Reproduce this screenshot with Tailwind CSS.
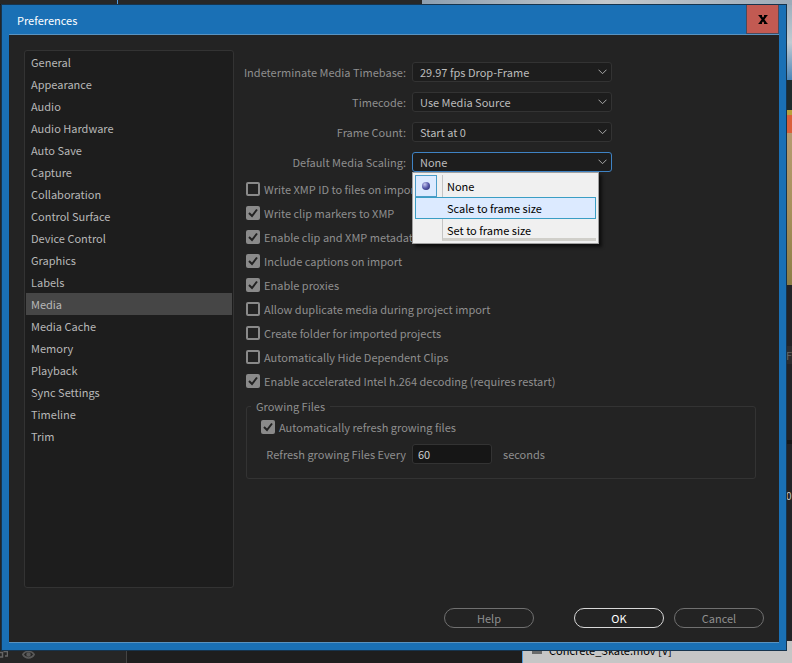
<!DOCTYPE html>
<html lang="en">
<head>
    <meta charset="UTF-8">
    <meta name="viewport" content="width=device-width, initial-scale=1.0">
    <title>Preferences</title>
    <script src="https://cdn.jsdelivr.net/npm/@tailwindcss/browser@4"></script>
</head>
<body class="bg-[#1e1e1e] font-['Noto_Sans_CJK_SC',sans-serif] text-[11px] leading-[20px] text-[#8f8f8f]">
<div class="relative min-h-screen flex flex-col overflow-hidden">

    <!-- Application behind the dialog: top edge -->
    <div class="h-[5px] flex bg-[#272727]">
        <div class="w-[117px] border-b border-[#1a1a1a]"></div>
        <div class="w-[1px] bg-[#4f9be0]"></div>
        <div class="w-[304px] border-b border-[#1a1a1a]"></div>
        <div class="flex-1 bg-linear-to-r from-[#8d9fb0] via-[#c3c8cc] to-[#9dabb9]"></div>
    </div>

    <div class="flex-1 flex">
        <div class="w-[2px] bg-[#252525]"></div>

        <!-- Dialog -->
        <main class="relative flex-1 flex flex-col bg-[#1a70b5] outline outline-[#17344d]">
            <header class="h-[29px] flex items-center pl-[15px] pr-[7px]">
                <h1 class="flex-1 text-white">Preferences</h1>
                <button aria-label="Close" class="w-[33px] h-[29px] grid place-items-center bg-[#c25a52] border-x border-b border-[#4a4a5c]">
                    <svg width="10" height="9" viewBox="0 0 10 9" fill="none" stroke="#000" stroke-width="2.2"><path d="M2 .5l6 8M8 .5l-6 8"/><path stroke-width="1" d="M.5 .5h3.500M6 .5h3.500M.5 8.500h3.500M6 8.500h3.500"/></svg>
                </button>
            </header>

            <div class="flex-1 flex flex-col gap-[20px] mx-[7px] mb-[7px] px-[15px] pt-[15px] pb-[14px] bg-[#232323] border-y border-[#5a93c0]">
                <div class="flex-1 flex gap-[12px]">

                    <!-- Category list -->
                    <nav class="w-[210px] border border-[#333] rounded-[3px] bg-[#1d1d1d] text-[#b8b8b8]">
                        <ul class="px-[1px] leading-[22px]">
                            <li><a href="#" class="block px-[5px]">General</a></li>
                            <li><a href="#" class="block px-[5px]">Appearance</a></li>
                            <li><a href="#" class="block px-[5px]">Audio</a></li>
                            <li><a href="#" class="block px-[5px]">Audio Hardware</a></li>
                            <li><a href="#" class="block px-[5px]">Auto Save</a></li>
                            <li><a href="#" class="block px-[5px]">Capture</a></li>
                            <li><a href="#" class="block px-[5px]">Collaboration</a></li>
                            <li><a href="#" class="block px-[5px]">Control Surface</a></li>
                            <li><a href="#" class="block px-[5px]">Device Control</a></li>
                            <li><a href="#" class="block px-[5px]">Graphics</a></li>
                            <li><a href="#" class="block px-[5px]">Labels</a></li>
                            <li><a href="#" class="block px-[5px] bg-[#464646]">Media</a></li>
                            <li><a href="#" class="block px-[5px]">Media Cache</a></li>
                            <li><a href="#" class="block px-[5px]">Memory</a></li>
                            <li><a href="#" class="block px-[5px]">Playback</a></li>
                            <li><a href="#" class="block px-[5px]">Sync Settings</a></li>
                            <li><a href="#" class="block px-[5px]">Timeline</a></li>
                            <li><a href="#" class="block px-[5px]">Trim</a></li>
                        </ul>
                    </nav>

                    <!-- Media settings -->
                    <section class="flex-1 pt-[12px] pr-[8px]">
                        <div class="flex flex-col gap-[10px]">
                            <div class="flex gap-[6px]">
                                <label for="timebase" class="w-[160px] flex justify-end whitespace-nowrap">Indeterminate Media Timebase:</label>
                                <div class="relative w-[200px]">
                                    <select id="timebase" class="block appearance-none w-full h-[20px] pl-[7px] border border-[#333] rounded-[3px] bg-[#1d1d1d] text-[#bcbcbc] leading-[18px]"><option>29.97 fps Drop-Frame</option></select>
                                    <svg class="absolute right-[5px] top-[7px] pointer-events-none" width="9" height="6" viewBox="0 0 9 6" fill="none" stroke="#a8a8a8"><path d="M.5 .7l4 4 4-4"/></svg>
                                </div>
                            </div>
                            <div class="flex gap-[6px]">
                                <label for="timecode" class="w-[160px] flex justify-end">Timecode:</label>
                                <div class="relative w-[200px]">
                                    <select id="timecode" class="block appearance-none w-full h-[20px] pl-[7px] border border-[#333] rounded-[3px] bg-[#1d1d1d] text-[#bcbcbc] leading-[18px]"><option>Use Media Source</option></select>
                                    <svg class="absolute right-[5px] top-[7px] pointer-events-none" width="9" height="6" viewBox="0 0 9 6" fill="none" stroke="#a8a8a8"><path d="M.5 .7l4 4 4-4"/></svg>
                                </div>
                            </div>
                            <div class="flex gap-[6px]">
                                <label for="frames" class="w-[160px] flex justify-end">Frame Count:</label>
                                <div class="relative w-[200px]">
                                    <select id="frames" class="block appearance-none w-full h-[20px] pl-[7px] border border-[#333] rounded-[3px] bg-[#1d1d1d] text-[#bcbcbc] leading-[18px]"><option>Start at 0</option></select>
                                    <svg class="absolute right-[5px] top-[7px] pointer-events-none" width="9" height="6" viewBox="0 0 9 6" fill="none" stroke="#a8a8a8"><path d="M.5 .7l4 4 4-4"/></svg>
                                </div>
                            </div>
                            <div class="flex gap-[6px]">
                                <label for="scaling" class="w-[160px] flex justify-end">Default Media Scaling:</label>
                                <div class="relative w-[200px]">
                                    <select id="scaling" class="block appearance-none w-full h-[20px] pl-[7px] border border-[#3f83c4] rounded-[3px] bg-[#1d1d1d] text-[#bcbcbc] leading-[18px]"><option>None</option><option>Scale to frame size</option><option>Set to frame size</option></select>
                                    <svg class="absolute right-[5px] top-[7px] pointer-events-none" width="9" height="6" viewBox="0 0 9 6" fill="none" stroke="#a8a8a8"><path d="M.5 .7l4 4 4-4"/></svg>

                                    <!-- Open menu -->
                                    <div role="menu" class="absolute z-10 left-0 top-full w-[187px] p-[2px] border border-[#a0a0a0] bg-[#f0f0f0] text-black leading-[22px] shadow-[3px_3px_3px_rgba(0,0,0,0.6)]">
                                        <button role="menuitem" class="w-full h-[22px] flex text-left">
                                            <span class="w-[22px] h-[22px] grid place-items-center border border-[#4a9cc8] bg-[#dceaff]">
                                                <span class="size-[8px] rounded-full bg-radial-[at_35%_30%] from-[#c4c6ee] via-[#5558a8] to-[#22245f]"></span>
                                            </span>
                                            <span class="flex-1 ml-[5px] pl-[4px] border-l border-[#c4c4c4]">None</span>
                                        </button>
                                        <button role="menuitem" class="w-full h-[22px] block pl-[31px] text-left leading-[20px] border border-[#3a9ec4] bg-[#dceaff]">Scale to frame size</button>
                                        <button role="menuitem" class="w-full h-[22px] flex pl-[27px] text-left">
                                            <span class="flex-1 h-[22px] pl-[4px] border-l border-l-[#c4c4c4] border-b-[3px] border-b-[#d0cfca]">Set to frame size</span>
                                        </button>
                                    </div>
                                </div>
                            </div>
                        </div>

                        <div class="mt-[5px] leading-[24px]">
                            <label class="flex items-center gap-[4px]"><input type="checkbox" class="appearance-none size-[14px] border-2 border-[#8a8a8a] rounded-[2px]">Write XMP ID to files on import</label>
                            <label class="flex items-center gap-[4px]"><span class="relative size-[14px]"><input type="checkbox" checked class="block appearance-none size-[14px] rounded-[2px] bg-[#8a8a8a]"><svg class="absolute inset-0 pointer-events-none" width="14" height="14" viewBox="0 0 14 14" fill="none" stroke="#232323" stroke-width="2"><path d="M3 7l3 3 5-6.500"/></svg></span>Write clip markers to XMP</label>
                            <label class="flex items-center gap-[4px]"><span class="relative size-[14px]"><input type="checkbox" checked class="block appearance-none size-[14px] rounded-[2px] bg-[#8a8a8a]"><svg class="absolute inset-0 pointer-events-none" width="14" height="14" viewBox="0 0 14 14" fill="none" stroke="#232323" stroke-width="2"><path d="M3 7l3 3 5-6.500"/></svg></span>Enable clip and XMP metadata</label>
                            <label class="flex items-center gap-[4px]"><span class="relative size-[14px]"><input type="checkbox" checked class="block appearance-none size-[14px] rounded-[2px] bg-[#8a8a8a]"><svg class="absolute inset-0 pointer-events-none" width="14" height="14" viewBox="0 0 14 14" fill="none" stroke="#232323" stroke-width="2"><path d="M3 7l3 3 5-6.500"/></svg></span>Include captions on import</label>
                            <label class="flex items-center gap-[4px]"><span class="relative size-[14px]"><input type="checkbox" checked class="block appearance-none size-[14px] rounded-[2px] bg-[#8a8a8a]"><svg class="absolute inset-0 pointer-events-none" width="14" height="14" viewBox="0 0 14 14" fill="none" stroke="#232323" stroke-width="2"><path d="M3 7l3 3 5-6.500"/></svg></span>Enable proxies</label>
                            <label class="flex items-center gap-[4px]"><input type="checkbox" class="appearance-none size-[14px] border-2 border-[#8a8a8a] rounded-[2px]">Allow duplicate media during project import</label>
                            <label class="flex items-center gap-[4px]"><input type="checkbox" class="appearance-none size-[14px] border-2 border-[#8a8a8a] rounded-[2px]">Create folder for imported projects</label>
                            <label class="flex items-center gap-[4px]"><input type="checkbox" class="appearance-none size-[14px] border-2 border-[#8a8a8a] rounded-[2px]">Automatically Hide Dependent Clips</label>
                            <label class="flex items-center gap-[4px]"><span class="relative size-[14px]"><input type="checkbox" checked class="block appearance-none size-[14px] rounded-[2px] bg-[#8a8a8a]"><svg class="absolute inset-0 pointer-events-none" width="14" height="14" viewBox="0 0 14 14" fill="none" stroke="#232323" stroke-width="2"><path d="M3 7l3 3 5-6.500"/></svg></span>Enable accelerated Intel h.264 decoding (requires restart)</label>
                        </div>

                        <fieldset class="mt-[3px] px-[14px] pb-[14px] border border-[#333] rounded-[3px]">
                            <legend class="-ml-[10px] px-[5px]">Growing Files</legend>
                            <label class="flex items-center gap-[4px] h-[22px]"><span class="relative size-[14px]"><input type="checkbox" checked class="block appearance-none size-[14px] rounded-[2px] bg-[#8a8a8a]"><svg class="absolute inset-0 pointer-events-none" width="14" height="14" viewBox="0 0 14 14" fill="none" stroke="#232323" stroke-width="2"><path d="M3 7l3 3 5-6.500"/></svg></span>Automatically refresh growing files</label>
                            <div class="mt-[6px] flex gap-[6px]">
                                <label for="refresh" class="w-[145px] flex justify-end whitespace-nowrap">Refresh growing Files Every</label>
                                <input id="refresh" type="text" value="60" class="w-[80px] h-[20px] px-[5px] border border-[#333] rounded-[3px] bg-[#161616] text-[#d0d0d0]">
                                <span class="pl-[5px]">seconds</span>
                            </div>
                        </fieldset>
                    </section>
                </div>

                <footer class="flex justify-end">
                    <button class="w-[90px] h-[20px] mr-[40px] border border-[#707070] rounded-full leading-[18px]">Help</button>
                    <button class="w-[90px] h-[20px] mr-[10px] border border-[#d8d8d8] rounded-full leading-[18px] text-white">OK</button>
                    <button class="w-[90px] h-[20px] border border-[#707070] rounded-full leading-[18px]">Cancel</button>
                </footer>
            </div>
        </main>

        <!-- Right edge: program monitor and panels -->
        <div class="w-[6px] flex flex-col overflow-hidden bg-[#232326]">
            <div class="h-[75px] bg-linear-to-b from-[#9fb0be] via-[#c0cbd2] to-[#4a86b8]"></div>
            <div class="h-[30px] bg-[#1f2b2c]"></div>
            <div class="h-[5px] bg-[#b7a13a]"></div>
            <div class="h-[18px] bg-[#d9603a]"></div>
            <div class="h-[152px] bg-linear-to-b from-[#b59b70] via-[#a8905c] to-[#8c7d45]"></div>
            <div class="h-[61px]"></div>
            <div class="h-[18px] leading-[18px] bg-[#2c2c2e] text-[#666]">F</div>
            <div class="h-[76px]"></div>
            <div class="h-[4px] bg-[#171717]"></div>
            <div class="h-[42px]"></div>
            <div class="h-[20px] text-[10px] text-[#c8c8c8]">0</div>
            <div class="flex-1"></div>
            <div class="h-[9px] bg-[#c4c4c4]"></div>
        </div>
    </div>

    <!-- Bottom edge: timeline -->
    <div class="h-[13px] flex overflow-hidden bg-[#1e1e1e]">
        <div class="w-[127px] flex gap-[14px] bg-[#262626] border-r border-[#444]">
            <svg width="8" height="9" viewBox="0 0 8 9" fill="none" stroke="#666" stroke-width="1.500"><path d="M0 2.500h2.500v4.500H0M3.500 1.500h4v4.500H5"/></svg>
            <svg width="13" height="9" viewBox="0 0 13 9" fill="none" stroke="#5a5a5a" stroke-width="1.500"><path d="M.8 4.500C3.500 0 9.500 0 12.200 4.500 9.500 9 3.500 9 .8 4.500z"/><circle cx="6.500" cy="4.500" r="1.500" fill="#5a5a5a"/></svg>
        </div>
        <div class="w-[395px]"></div>
        <div class="flex-1 flex pl-[9px] gap-[7px] border-l border-[#4f9be0] bg-[#c6c6c6] text-black leading-[0px]">
            <span class="w-[10px] h-[4px] bg-[#6a6a6a]"></span>
            <span>Concrete_Skate.mov [V]</span>
        </div>
    </div>
</div>
</body>
</html>
